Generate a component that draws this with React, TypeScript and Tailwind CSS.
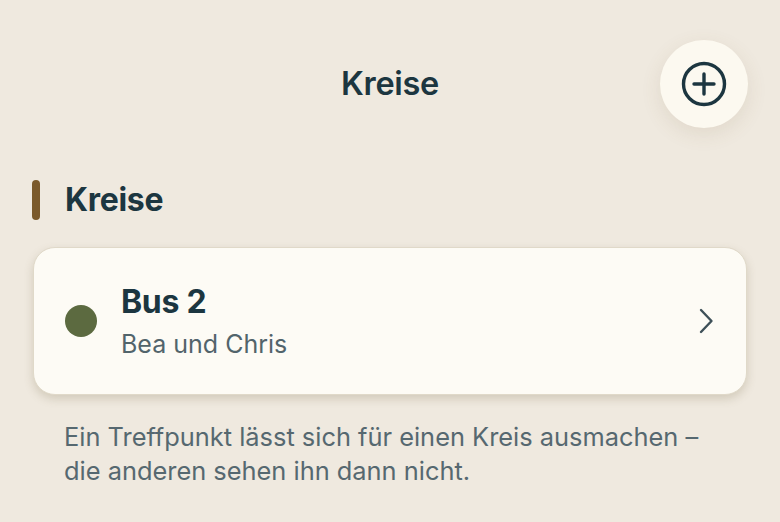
export default function App() {
  return (
    <div
      className="w-[780px] h-[522px] overflow-hidden bg-[#efe9df] text-[#1c3640]"
      style={{ fontFamily: 'Inter, "Noto Sans", sans-serif' }}
    >
      <header className="relative h-[150px] flex items-start justify-center">
        <h1 className="mt-[64px] text-[32.5px] font-semibold tracking-[-0.3px] leading-[40px]">Kreise</h1>
        <button className="absolute right-[32px] top-[40px] w-[88px] h-[88px] rounded-full bg-[#fcf9f0] shadow-[0_6px_20px_rgba(120,100,60,0.12)] flex items-center justify-center">
          <svg width="46" height="46" viewBox="0 0 46 46" fill="none" stroke="#1c3640" strokeWidth="3.4" strokeLinecap="round">
            <circle cx="23" cy="23" r="20.5" />
            <path d="M23 13v20M13 23h20" />
          </svg>
        </button>
      </header>

      <section className="px-[32px]">
        <div className="flex items-center gap-[25px] h-[40px] mt-[30px]">
          <span className="w-[8px] h-[40px] rounded-full bg-[#7b5a2b]" />
          <h2 className="text-[32px] font-bold tracking-[-0.3px] leading-[40px]">Kreise</h2>
        </div>

        <div className="mt-[27px] mx-[1px] h-[148px] rounded-[22px] bg-[#fdfbf5] border border-[#e0d9c9] shadow-[0_4px_10px_rgba(110,95,60,0.22)] flex items-center pl-[31px] pr-[30px]">
          <span className="w-[32px] h-[32px] rounded-full bg-[#5c6a40] shrink-0" />
          <div className="ml-[24px] flex-1 flex flex-col">
            <span className="text-[32px] font-bold leading-[38px] tracking-[-0.3px]">Bus 2</span>
            <span className="mt-[7px] text-[25px] leading-[32px] text-[#52646b]">Bea und Chris</span>
          </div>
          <svg width="16" height="26" viewBox="0 0 16 26" fill="none" stroke="#3e5058" strokeWidth="2.4" strokeLinecap="round" strokeLinejoin="round" className="mr-[2px]">
            <path d="M3 2l10.5 11L3 24" />
          </svg>
        </div>

        <p className="mt-[25px] px-[32px] text-[25.4px] leading-[34px] text-[#566870]">
          Ein Treffpunkt lässt sich für einen Kreis ausmachen – die anderen sehen ihn dann nicht.
        </p>
      </section>
    </div>
  )
}
